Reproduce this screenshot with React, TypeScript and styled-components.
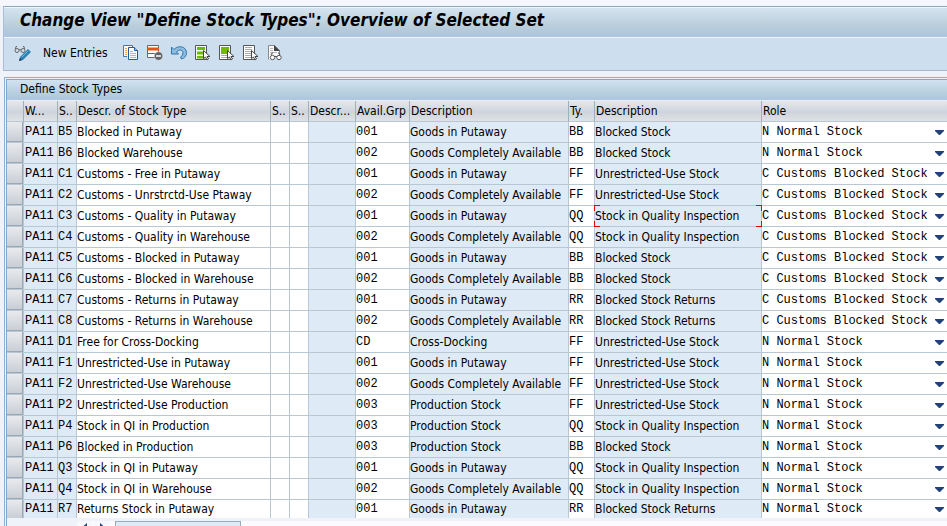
import React from "react";
import styled, { createGlobalStyle, css } from "styled-components";

const UI_FONT = '"DejaVu Sans Condensed", "DejaVu Sans", sans-serif';
const CODE_FONT = '"Liberation Mono", monospace';
const LINE = "#b7c8d4";
const READONLY = "#deeaf6";

const GlobalStyle = createGlobalStyle`
  *, *::before, *::after { box-sizing: border-box; }
  body { margin: 0; background: #eff2f9; color: #000; font: 12px/16px ${UI_FONT}; }
  button, input, select { margin: 0; padding: 0; border: 0; border-radius: 0; color: inherit; font: inherit; }
`;

const Screen = styled.div`
  height: 100vh;
  overflow: hidden;
  padding: 6px 0 0 3px;
  background: linear-gradient(#f6f6ff, #f6f6ff 5px, transparent 5px);
`;

const Window = styled.header`
  border: 1px solid #aab7ca;
  border-top-color: #8fa9c4;
  border-left-color: #a9bfd9;
  border-right: 0;
  background: #cddfef;
`;

const Title = styled.h1`
  margin: 0;
  height: 31px;
  padding: 0 16px;
  border-top: 1px solid #f0f5fa;
  border-bottom: 1px solid #eef4fa;
  background: linear-gradient(#d5e3f0, #bacfdb 60%, #acc4de);
  font: italic bold 17px/24px ${UI_FONT};
  white-space: nowrap;
`;

const Toolbar = styled.div`
  display: flex;
  align-items: center;
  gap: 8px;
  height: 32px;
  padding: 0 10px 2px;
`;

const IconButton = styled.button`
  display: grid;
  width: 16px;
  height: 16px;
  background: none;
`;

const ViewButton = styled(IconButton)`
  width: 18px;
`;

const TextButton = styled.button`
  margin: 0 3px;
  min-width: 69px;
  height: 20px;
  background: none;
  line-height: 20px;
  text-align: left;
  white-space: nowrap;
`;

const Group = styled.section`
  margin: 6px 0 0 1px;
  padding: 1px 0 0 1px;
  border: 1px solid #8eb0d3;
  border-width: 1px 0 0 1px;
  background: #eff2f9;
`;

const GroupInner = styled.div`
  border: 1px solid #8ba6c4;
  border-width: 1px 0 0 1px;
`;

const GroupTitle = styled.h2`
  margin: 0;
  height: 20px;
  padding: 0 13px;
  background: linear-gradient(#d2e2f1, #b9d0de 60%, #adc6e0);
  font: normal 12px/18px ${UI_FONT};
`;

const Table = styled.table`
  width: 100%;
  table-layout: fixed;
  border-collapse: separate;
  border-spacing: 0;
  border-top: 1px solid #e8eef5;
`;

const Column = styled.col<{ $width?: number }>`
  width: ${(p) => (p.$width ? `${p.$width}px` : "auto")};
`;

const HeadCell = styled.th`
  height: 21px;
  padding: 0 0 0 1px;
  border-right: 1px solid #9eb0ba;
  border-bottom: 1px solid ${LINE};
  background: linear-gradient(#e6e7ec, #cfd4dc 55%, #dfe1e5);
  font: normal 12px/20px ${UI_FONT};
  text-align: left;
  white-space: nowrap;
  overflow: hidden;

  &:last-child { border-right: 0; }
`;

const Row = styled.tr<{ $last: boolean }>`
  height: ${(p) => (p.$last ? 18 : 21)}px;
`;

const Cell = styled.td<{ $readOnly?: boolean; $code?: boolean; $selected?: boolean }>`
  position: ${(p) => (p.$selected ? "relative" : "static")};
  padding: 0;
  border-right: 1px solid ${LINE};
  border-bottom: 1px solid ${LINE};
  background: ${(p) => (p.$readOnly ? READONLY : "#fff")};
  font-family: ${(p) => (p.$code ? CODE_FONT : UI_FONT)};
  white-space: nowrap;

  &:last-child { border-right: 0; }
  ${Row}:last-child & { border-bottom: 0; }
`;

const KeyCell = styled(Cell)`
  padding-left: 1px;
`;

const RowButton = styled.button`
  display: block;
  width: 100%;
  height: 20px;
  border: 1px solid #9aa8b6;
  border-width: 0 1px 1px 0;
  background: linear-gradient(#e9eaed, #c9ced5);

  ${Row}:last-child & { height: 18px; border-bottom: 0; }
`;

const fieldStyle = css`
  display: block;
  width: 100%;
  height: 16px;
  background: transparent;
  outline: 0;
`;

const Field = styled.input`
  ${fieldStyle}
`;

const RoleField = styled.div`
  display: grid;
  grid-template-columns: 1fr 9px;
  align-items: center;
  padding-right: 3px;
`;

const RoleSelect = styled.select`
  ${fieldStyle}
  grid-area: 1 / 1 / 2 / 3;
  appearance: none;
`;

const Arrow = styled.svg`
  grid-area: 1 / 2;
  pointer-events: none;
`;

const Corner = styled.span<{ $top?: boolean; $left?: boolean }>`
  position: absolute;
  z-index: 1;
  width: 6px;
  height: 6px;
  border: 0 solid #e00000;
  ${(p) => (p.$top ? "top: -1px; border-top-width: 1px;" : "bottom: -1px; border-bottom-width: 1px;")}
  ${(p) => (p.$left ? "left: -1px; border-left-width: 1px;" : "right: -1px; border-right-width: 1px;")}
`;

const ScrollRow = styled.div`
  display: flex;
  height: 20px;
  margin-top: 3px;
  padding-left: 70px;
  background: linear-gradient(90deg, #eff2f9 70px, #fbfaff 70px);
`;

const ScrollButton = styled.button`
  display: grid;
  place-items: start center;
  width: 15px;
  height: 16px;
  margin-right: 2px;
  padding-top: 2px;
  background: #f6f8fc;
`;

const ScrollThumb = styled.div`
  width: 126px;
  height: 16px;
  margin-left: 4px;
  border: 1px solid #9aabbc;
  background: #deebf6;
`;

const OUTLINE = "#555";

const DisplayIcon = () => (
  <svg width="18" height="17" viewBox="0 0 18 17" fill="none" stroke="#666" strokeWidth="1">
    <path d="M1.500 4 2 1.500h1M10.500 4 10 1.500H9M5 5q1-1 2 0" />
    <circle cx="3" cy="5.500" r="2" />
    <circle cx="9" cy="5.500" r="2" />
    <path d="m14 4 3 3-8 8-4 1 1-4z" fill="#2e83b4" stroke="none" />
    <path d="m8 12 6-6" stroke="#72b3d8" />
    <path d="m5 16 1-3 2 2z" fill="#335" stroke="none" />
  </svg>
);

const CopyIcon = () => (
  <svg width="16" height="16" viewBox="0 0 16 16">
    <path d="M9.500 2V.5h-9v11H4" fill="#f8fbff" stroke="#3a7cb8" />
    <path d="M2 3.500h2M2 5.500h2M2 7.500h2M2 9.500h2" stroke="#e0a34a" />
    <path d="M5.500 2.500h6l3 3v9h-9z" fill="#fff" stroke="#175f9f" />
    <path d="M11.500 2.500v3h3" fill="#a9cbe5" stroke="#175f9f" />
    <path d="M7 6.500h3M7 8.500h6M7 10.500h6M7 12.500h6" stroke="#f4ba00" />
  </svg>
);

const DeleteIcon = () => (
  <svg width="16" height="16" viewBox="0 0 16 16">
    <path d="M.5.5h11v12H.5z" fill="#fff" stroke="#666" />
    <path d="M0 2.500h12v3H0z" fill="#e75311" />
    <path d="M0 8.500h8" stroke="#666" />
    <circle cx="11.500" cy="11" r="4.300" fill="#626567" stroke="#eee" strokeWidth=".5" />
    <path d="M9 11h5" stroke="#fff" strokeWidth="1.500" />
  </svg>
);

const UndoIcon = () => (
  <svg width="16" height="16" viewBox="0 0 16 16">
    <path d="M.5 2v7h7L5.500 7C7 4.500 12 4 12 8q0 3-2.500 4l1 2C14 13 15.500 10.500 15.500 7.500 15 1 7 0 3 4.500z" fill="#8fbde0" stroke="#2c75aa" />
  </svg>
);

const Cursor = () => (
  <path d="M8.500 5.500v8l2-1.500 1.500 3 1.500-1-1.500-2.500h3z" fill="#fff" stroke="#444" />
);

const SelectAllIcon = () => (
  <svg width="16" height="16" viewBox="0 0 16 16">
    <path d="M.5.5h11v14H.5z" fill="#f4fff0" stroke={OUTLINE} />
    <path d="M2 2h8v3H2zM2 6.500h8v3H2zM2 11h8v2.500H2z" fill="#6fb80f" />
    <Cursor />
  </svg>
);

const SelectBlockIcon = () => (
  <svg width="16" height="16" viewBox="0 0 16 16">
    <path d="M.5.5h11v14H.5z" fill="#fff" stroke={OUTLINE} />
    <path d="M2 2h8v7H2z" fill="#72b80d" />
    <path d="M2 10.500h6M2 12.500h6" stroke="#aaa" />
    <Cursor />
  </svg>
);

const DeselectIcon = () => (
  <svg width="16" height="16" viewBox="0 0 16 16">
    <path d="M.5.5h11v14H.5z" fill="#fff" stroke={OUTLINE} />
    <path d="M2 2.500h7M2 4.500h7M2 6.500h6M2 8.500h6M2 10.500h6M2 12.500h6" stroke="#aaa" />
    <Cursor />
  </svg>
);

const PrintViewIcon = () => (
  <svg width="16" height="16" viewBox="0 0 16 16" fill="none">
    <path d="M1.500 14.500V.5h6l5 5v5" fill="#f8f8f8" stroke="#888" />
    <path d="M7 0v6h6z" fill="#444" />
    <path d="M3 3.500h3M3 5.500h3M3 7.500h7" stroke="#bbb" />
    <path d="m4 10 1-2h1M13 10l-1-2h-1M7 11.500h3" stroke="#555" />
    <circle cx="5.500" cy="12.500" r="2.200" fill="#fff" stroke="#555" />
    <circle cx="12" cy="12.500" r="2.200" fill="#fff" stroke="#555" />
  </svg>
);

const tools = [
  { label: "Copy As", Icon: CopyIcon },
  { label: "Delete", Icon: DeleteIcon },
  { label: "Undo Change", Icon: UndoIcon },
  { label: "Select All", Icon: SelectAllIcon },
  { label: "Select Block", Icon: SelectBlockIcon },
  { label: "Deselect All", Icon: DeselectIcon },
  { label: "Print View", Icon: PrintViewIcon },
];

const columns: { label: string; width?: number }[] = [
  { label: "", width: 17 },
  { label: "W...", width: 34 },
  { label: "S..", width: 19 },
  { label: "Descr. of Stock Type", width: 194 },
  { label: "S..", width: 19 },
  { label: "S..", width: 19 },
  { label: "Descr...", width: 47 },
  { label: "Avail.Grp", width: 54 },
  { label: "Description", width: 159 },
  { label: "Ty.", width: 26 },
  { label: "Description", width: 167 },
  { label: "Role" },
];

const groupNames: Record<string, string> = {
  "001": "Goods in Putaway",
  "002": "Goods Completely Available",
  "003": "Production Stock",
  CD: "Cross-Docking",
};

const typeNames: Record<string, string> = {
  BB: "Blocked Stock",
  FF: "Unrestricted-Use Stock",
  QQ: "Stock in Quality Inspection",
  RR: "Blocked Stock Returns",
};

const roles: Record<string, string> = {
  N: "N Normal Stock",
  C: "C Customs Blocked Stock",
};

const stockTypes = [
  ["B5", "Blocked in Putaway", "001", "BB", "N"],
  ["B6", "Blocked Warehouse", "002", "BB", "N"],
  ["C1", "Customs - Free in Putaway", "001", "FF", "C"],
  ["C2", "Customs - Unrstrctd-Use Ptaway", "002", "FF", "C"],
  ["C3", "Customs - Quality in Putaway", "001", "QQ", "C"],
  ["C4", "Customs - Quality in Warehouse", "002", "QQ", "C"],
  ["C5", "Customs - Blocked in Putaway", "001", "BB", "C"],
  ["C6", "Customs - Blocked in Warehouse", "002", "BB", "C"],
  ["C7", "Customs - Returns in Putaway", "001", "RR", "C"],
  ["C8", "Customs - Returns in Warehouse", "002", "RR", "C"],
  ["D1", "Free for Cross-Docking", "CD", "FF", "N"],
  ["F1", "Unrestricted-Use in Putaway", "001", "FF", "N"],
  ["F2", "Unrestricted-Use Warehouse", "002", "FF", "N"],
  ["P2", "Unrestricted-Use Production", "003", "FF", "N"],
  ["P4", "Stock in QI in Production", "003", "QQ", "N"],
  ["P6", "Blocked in Production", "003", "BB", "N"],
  ["Q3", "Stock in QI in Putaway", "001", "QQ", "N"],
  ["Q4", "Stock in QI in Warehouse", "002", "QQ", "N"],
  ["R7", "Returns Stock in Putaway", "001", "RR", "N"],
];

const SELECTED = "C3";

export default function App() {
  return (
    <Screen>
      <GlobalStyle />
      <Window>
        <Title>Change View "Define Stock Types": Overview of Selected Set</Title>
        <Toolbar role="toolbar" aria-label="Application toolbar">
          <ViewButton aria-label="Display or Change">
            <DisplayIcon />
          </ViewButton>
          <TextButton>New Entries</TextButton>
          {tools.map(({ label, Icon }) => (
            <IconButton key={label} aria-label={label}>
              <Icon />
            </IconButton>
          ))}
        </Toolbar>
      </Window>
      <Group>
        <GroupInner>
          <GroupTitle>Define Stock Types</GroupTitle>
          <Table>
            <colgroup>
              {columns.map((c, i) => (
                <Column key={i} $width={c.width} />
              ))}
            </colgroup>
            <thead>
              <tr>
                {columns.map((c, i) => (
                  <HeadCell key={i} scope="col">{c.label}</HeadCell>
                ))}
              </tr>
            </thead>
            <tbody>
              {stockTypes.map(([id, name, group, type, role], i) => (
                <Row key={id} $last={i === stockTypes.length - 1}>
                  <Cell>
                    <RowButton aria-label={`Select row ${id}`} />
                  </Cell>
                  <KeyCell $readOnly $code>PA11</KeyCell>
                  <Cell $readOnly $code>{id}</Cell>
                  <Cell>
                    <Field aria-label={`Description of ${id}`} defaultValue={name} />
                  </Cell>
                  <Cell />
                  <Cell />
                  <Cell $readOnly />
                  <Cell $code>
                    <Field aria-label={`Availability group of ${id}`} defaultValue={group} />
                  </Cell>
                  <Cell $readOnly>{groupNames[group]}</Cell>
                  <Cell $code>
                    <Field aria-label={`Type of ${id}`} defaultValue={type} />
                  </Cell>
                  <Cell $readOnly $selected={id === SELECTED}>
                    {typeNames[type]}
                    {id === SELECTED && (
                      <>
                        <Corner $top $left />
                        <Corner $top />
                        <Corner $left />
                        <Corner />
                      </>
                    )}
                  </Cell>
                  <Cell $code>
                    <RoleField>
                      <RoleSelect aria-label={`Role of ${id}`} defaultValue={role}>
                        {Object.entries(roles).map(([key, label]) => (
                          <option key={key} value={key}>{label}</option>
                        ))}
                      </RoleSelect>
                      <Arrow width="9" height="5" viewBox="0 0 9 5">
                        <path d="M0 0h9v1L5 5H4L0 1z" fill="#24427a" />
                      </Arrow>
                    </RoleField>
                  </Cell>
                </Row>
              ))}
            </tbody>
          </Table>
          <ScrollRow>
            <ScrollButton aria-label="Scroll left">
              <svg width="4" height="7" viewBox="0 0 4 7"><path d="M4 0v7L0 3.500z" fill="#24427a" /></svg>
            </ScrollButton>
            <ScrollButton aria-label="Scroll right">
              <svg width="4" height="7" viewBox="0 0 4 7"><path d="M0 0v7l4-3.500z" fill="#24427a" /></svg>
            </ScrollButton>
            <ScrollThumb />
          </ScrollRow>
        </GroupInner>
      </Group>
    </Screen>
  );
}
